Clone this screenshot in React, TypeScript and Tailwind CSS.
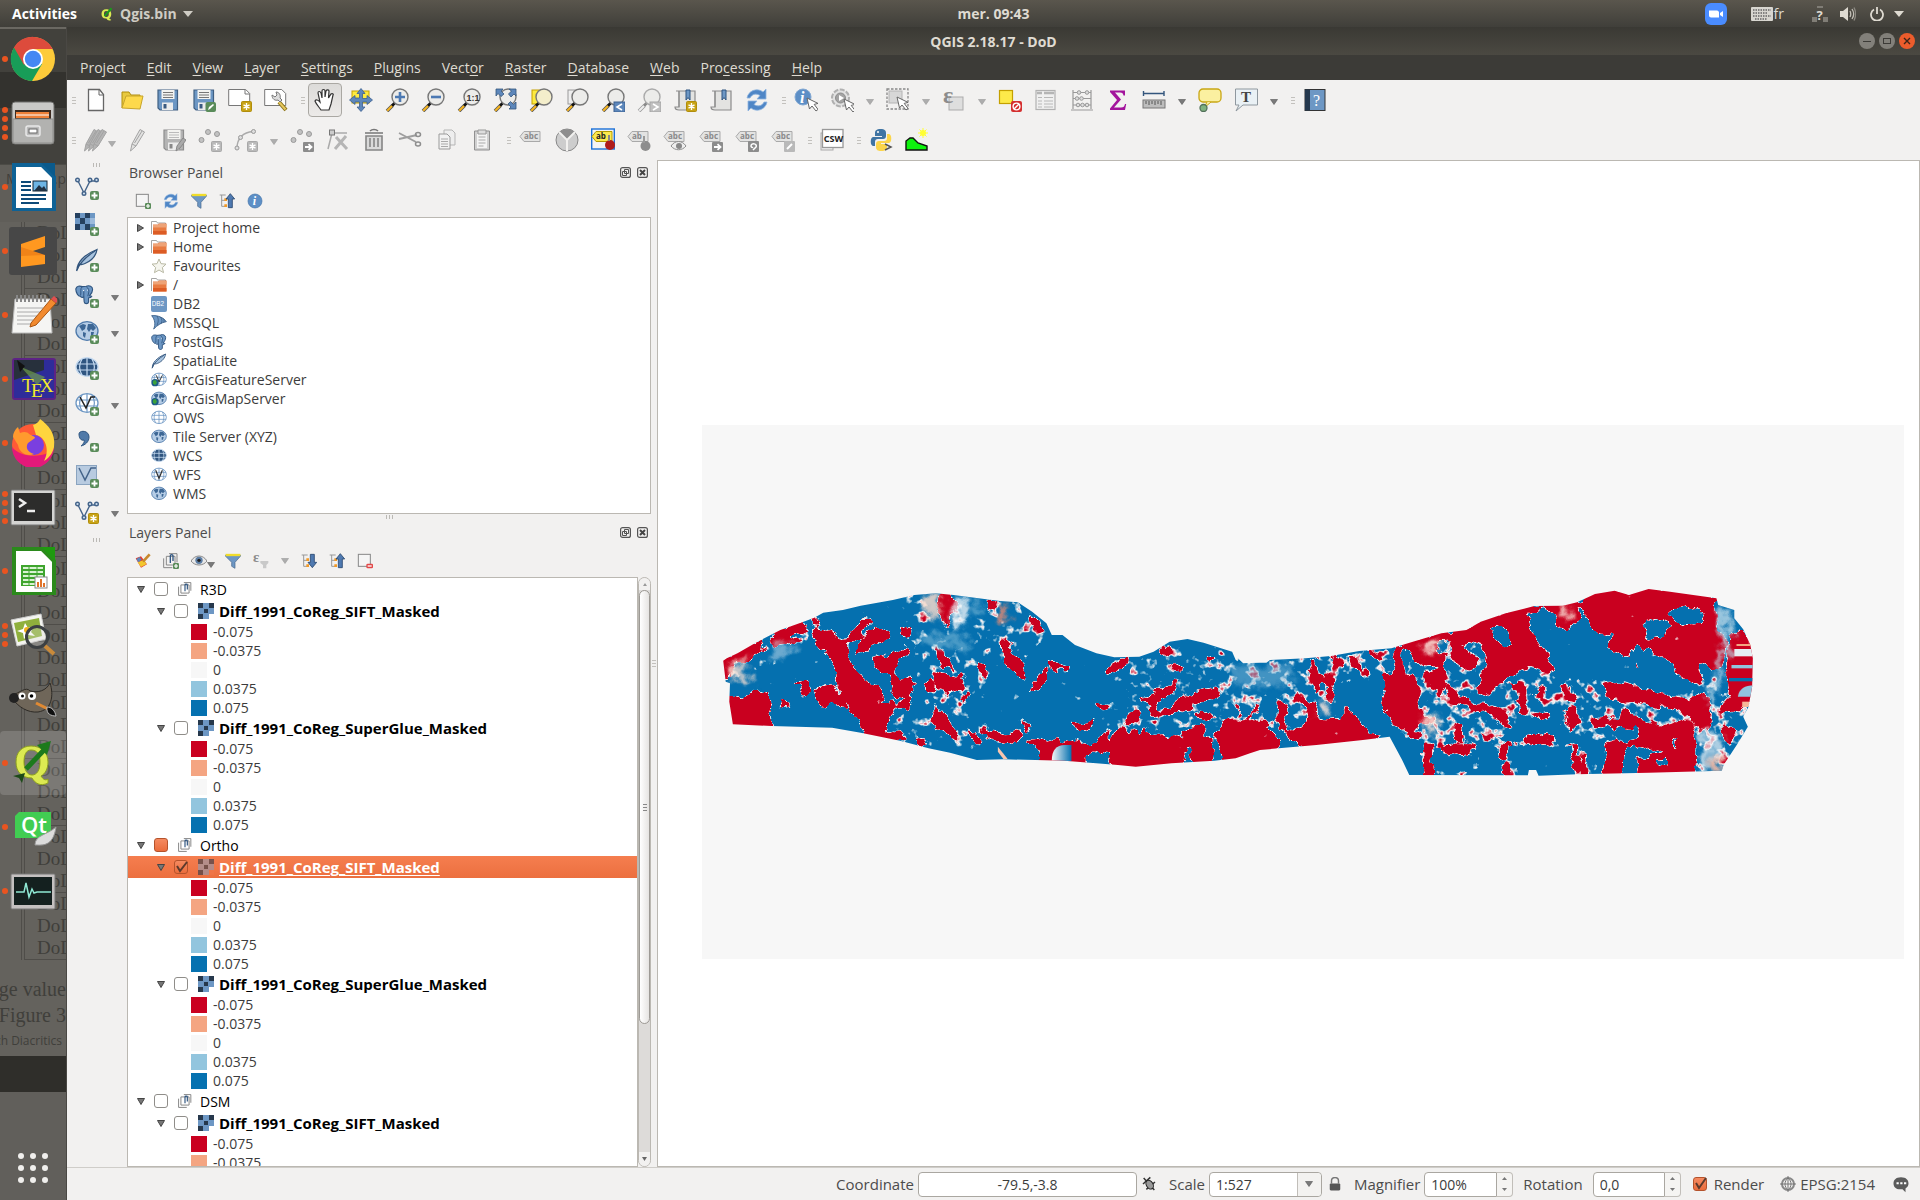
import React from "react";

type Kids = { children?: React.ReactNode };
const BLUE = "#6d97c4";
const NAVY = "#3a5a80";

/* ---------- small drawing helpers ---------- */
function I({ children, s = 24, vb = "0 0 24 24" }: Kids & { s?: number; vb?: string }) {
  return (
    <svg width={s} height={s} viewBox={vb} fill="none" className="shrink-0" aria-hidden="true">
      {children}
    </svg>
  );
}
const Star = ({ grey = false }: { grey?: boolean }) => (
  <g>
    <rect x="13.5" y="13.5" width="10" height="10" rx="1" fill={grey ? "#b9b9b9" : "#c8a315"} stroke={grey ? "#a8a8a8" : "#b08d0c"} />
    <path d="M18.5 15v7M15.5 16.8l6 3.4M21.5 16.8l-6 3.4" stroke="#fff" strokeWidth="1.4" />
  </g>
);
const Plus = () => (
  <g>
    <rect x="15" y="15" width="9" height="9" rx="2" fill="#5a8c5a" />
    <path d="M19.5 16.5v6M16.5 19.5h6" stroke="#fff" strokeWidth="1.8" />
  </g>
);
const ArrowBadge = ({ fill = "#8c8c8c" }: { fill?: string }) => (
  <g>
    <rect x="13" y="14" width="11" height="10" rx="1" fill={fill} />
    <path d="M15 19h6M18.5 16.2l3 2.8-3 2.8" stroke="#fff" strokeWidth="1.8" />
  </g>
);
const Cursor = ({ x = 12, y = 10 }: { x?: number; y?: number }) => (
  <path transform={`translate(${x} ${y})`} d="M0 0l2.500 11 2.500-3 4 5 2-1.600-3.800-5 3.800-1z" fill="#fff" stroke="#666" strokeWidth="1" />
);
const Mag = ({ children, grey = false, back }: Kids & { grey?: boolean; back?: string }) => (
  <I>
    {back && <rect x="3" y="2" width="12" height="14" fill={back} stroke={back === "#fdea3f" ? "#c4a000" : "#999"} />}
    <path d="M2 23l5.500-5.500" stroke={grey ? "#999" : "#555"} strokeWidth="3.600" />
    <path d="M2.200 22.800l5-5" stroke={grey ? "#eee" : "#f6b520"} strokeWidth="2" />
    <path d="M7 17.800l3-3" stroke={grey ? "#888" : "#111"} strokeWidth="2.800" />
    <circle cx="15" cy="9" r="8" fill={back === "#fdea3f" ? "#f4eecb" : "#ececea"} stroke={grey ? "#aaa" : "#777"} strokeWidth="1.400" />
    {children}
  </I>
);
const Floppy = ({ grey = false, children }: Kids & { grey?: boolean }) => (
  <I>
    <path d="M2 2h19.500v20H4l-2-2z" fill={grey ? "#b4b4b4" : BLUE} stroke={grey ? "#8e8e8e" : "#3f5f82"} strokeWidth="1.200" />
    <rect x="5.500" y="2" width="13" height="9" fill="#f3f3f0" />
    <path d="M7 4.500h10M7 7h10M7 9.500h10" stroke={grey ? "#bbb" : "#777"} />
    <rect x="6" y="14.500" width="11" height="7.500" fill="#ececec" />
    <rect x="7.500" y="16" width="3" height="4.500" fill={grey ? "#888" : NAVY} />
    {children}
  </I>
);
const Tag = ({ children, yellow = false, text = "abc" }: Kids & { yellow?: boolean; text?: string }) => (
  <I>
    {yellow && <rect x=".7" y="1" width="22.600" height="20" fill="#f4f4f4" stroke="#1c71d8" strokeWidth="1.400" />}
    <path d="M1 8.500L5 3.500h16v10H5z" fill={yellow ? "#fce94f" : "#e3e3e2"} stroke={yellow ? "#b39a00" : "#a9a9a9"} />
    <text x="5" y="11.300" fontSize="8" fontWeight="700" fontFamily="Open Sans" fill={yellow ? "#222" : "#8a8a8a"}>{text}</text>
    {children}
  </I>
);
const Hollow = "#9a9a9a";
const Dots = ({ children }: Kids) => (
  <I>
    <circle cx="3.500" cy="12" r="2.500" fill="#c2c2c2" stroke={Hollow} />
    <circle cx="10" cy="4" r="2.500" fill="#c2c2c2" stroke={Hollow} />
    <circle cx="19" cy="6" r="2.500" fill="#c2c2c2" stroke={Hollow} />
    {children}
  </I>
);
const VShape = () => (
  <g stroke="#44648a" strokeWidth="1.400">
    <path d="M3 5l6 12 6-12h7" />
    <g fill="#cfdeed">
      <circle cx="2.500" cy="4" r="1.800" /><circle cx="9" cy="17.500" r="1.800" /><circle cx="15" cy="4" r="1.800" /><circle cx="21.500" cy="4" r="1.800" />
    </g>
  </g>
);
const Globe = ({ fill = "#fff", line = "#6d97c4", land = false }: { fill?: string; line?: string; land?: boolean }) => (
  <g>
    <ellipse cx="12" cy="11" rx="11" ry="9.300" fill={fill} stroke={line} strokeWidth="1.300" />
    {land ? (
      <path d="M4 6l4-2 3 1-1 4-3 2-1-2zM13 4l5 0 3 4-3 3-2-2-2 3-2-3zM8 12l3 1-1 5-2-2zM16 12l3 0-1 4-2 0z" fill="#3d6795" />
    ) : (
      <path d="M1.500 8h21M1.500 14h21M12 2v18M7 3c-3 5-3 11 0 16M17 3c3 5 3 11 0 16" stroke={line} strokeWidth="1.200" />
    )}
  </g>
);
const DarkGlobe = () => <Globe fill="#2f5580" line="#c5daf0" />;
const Elephant = () => (
  <g strokeLinejoin="round">
    <path d="M1 5c1-4 5-4 8-3l5-.5c4-1.500 8 0 8 4 0 3-2 6-4 8l3 .5c-1 2-3 2-4 2v5c-.5 3-5 3-5.500 0L11 15c-2 1-4 0-4-1-3 1-6-5-6-9z" fill={BLUE} stroke="#2f5580" strokeWidth="1.400" />
    <path d="M9 2C6 5 8 9 7 13M14 2c3 2 4 5 3 8l-1 4M11 7v8" stroke="#2f5580" strokeWidth="1.200" />
    <path d="M10 7h1.500M15 6.500h1" stroke="#fff" strokeWidth="1.200" />
  </g>
);
const Feather = () => (
  <g>
    <path d="M2 22c0-7 6-15 20-20.500-1 6-5 11-12 14-2 1-5 1-6 .5z" fill="#a9c4df" stroke="#33557c" strokeWidth="1.300" />
    <path d="M1.500 23C5 14 12 8 20 3" stroke="#33557c" strokeWidth="1.300" />
  </g>
);
const Checker = () => (
  <g>
    <rect x="0" y="1" width="20" height="17" fill={BLUE} />
    <path d="M0 1h5v5H0zM10 1h5v5h-5zM5 6h5v6H5zM0 12h5v6H0zM10 12h5v6h-5z" fill="#24405f" />
    <path d="M15 6h5v6h-5z" fill="#9dbbdc" />
  </g>
);
const Refresh = () => (
  <g fill="#4f86c6" stroke="#8fb5df" strokeWidth=".8">
    <path d="M2 10C3 3 12-1 18 4l3-3v10h-9l3-3.500C11 5 7 6 5 10z" />
    <path d="M22 14c-1 7-10 11-16 6l-3 3V13h9l-3 3.500c4 2.500 8 1.500 10-2.500z" />
  </g>
);
const Book = () => (
  <g>
    <path d="M3 3h3v16H2c0 3 2 3 4 3h16V3z" fill="#e3e3e1" stroke="#8b8b8b" strokeWidth="1.200" />
    <path d="M6 3v16" stroke="#8b8b8b" />
    <path d="M13 2h4v10l-2-2.500-2 2.500z" fill={BLUE} stroke="#2f5580" />
  </g>
);
const Pencil = ({ dx = 0, fill = "#e2e2e1" }: { dx?: number; fill?: string }) => (
  <path transform={`translate(${dx} 0)`} d="M3.500 23l1.500-7L13 1.500l4.500 2.500-8.500 14zM5 16l4 2M7.500 15L15 3" fill={fill} stroke="#a3a3a3" />
);
const Python = () => (
  <g>
    <path d="M12 1c-5 0-6 2-6 4v3h7v1H4c-3 0-3 9 0 9h2v-4c0-2 1-3 3-3h5c2 0 3-1 3-3V5c0-3-2-4-5-4z" fill="#3f74a3" />
    <path d="M12 23c5 0 6-2 6-4v-3h-6v-1h8c3 0 3-9 0-9h-2v4c0 2-1 3-3 3h-5c-2 0-3 1-3 3v3c0 3 2 4 5 4z" fill="#fbd54a" />
    <circle cx="9" cy="4" r="1" fill="#fff" />
    <path d="M16 16l6 3-6 3" stroke="#555" strokeWidth="1.500" />
  </g>
);
const Caret = ({ light = false }: { light?: boolean }) => (
  <svg width="8" height="6" viewBox="0 0 8 6" aria-hidden="true"><path d="M.5.500h7L4 5.500z" fill={light ? "#adadad" : "#7a7a7a"} stroke={light ? "#999" : "#555"} strokeWidth=".6" /></svg>
);
const Eps = () => <text x="0" y="13" fontSize="22" fontFamily="Liberation Serif" fontWeight="700" fill="#8c8c8c">ε</text>;

/* ---------- toolbars ---------- */
type Tool = { k?: "grip" | "drop" | "on" | "wide"; n: string; i?: React.ReactNode; light?: boolean };

const row1: Tool[] = [
  { n: "New project", i: <I><path d="M4.500 1.500h11l4 5v16h-15z" fill="#fff" stroke="#666" strokeWidth="1.300" /><path d="M15 2v5h4.500" stroke="#666" /></I> },
  { n: "Open project", i: <I><path d="M2 20V4h7l2 3h9v4" fill="#e8c93f" stroke="#b08d0c" /><path d="M2 20l4-12h17l-3 13z" fill="#fdd94b" stroke="#c8a52a" /></I> },
  { n: "Save", i: <Floppy /> },
  { n: "Save as", i: <Floppy><rect x="13.500" y="14" width="10.500" height="10" rx="2" fill="#5a8c5a" /><path d="M16 22l1-3 4-3 1 1-4 4z" fill="#fff" /></Floppy> },
  { n: "New print composer", i: <I><path d="M.7 1.500h17l4 4v12H.7z" fill="#fff" stroke="#777" /><path d="M17 2v4h4.500" stroke="#777" /><Star /></I> },
  { n: "Composer manager", i: <I><path d="M.7 1.500h17l4 4v12H.7z" fill="#fff" stroke="#777" /><path d="M15 14l7 8" stroke="#8a7318" strokeWidth="4" /><path d="M15 14l6.500 7.500" stroke="#e6c75e" strokeWidth="2" /><path d="M8 7c0 4 3 6 6 5l2 2 2-2-2-2c1-3-1-6-4-6l1 3-2 2z" fill="#ddd" stroke="#777" /></I> },
  { k: "grip", n: "g1" },
  { k: "on", n: "Pan map", i: <I><path d="M8 22c-2-3-5-6-6-9 1-2 3-1 5 1L5 5c0-2 2-2 3 0l1 5V3c0-2 3-2 3 0v6l1-6c1-2 3-1 3 0l-.5 7L18 6c1-1 3 0 2 1l-2 9-2 6z" fill="#fff" stroke="#333" strokeWidth="1.200" /></I> },
  { n: "Pan to selection", i: <I><rect x="3" y="3" width="17" height="12" fill="#fdea3f" stroke="#c4a000" /><path d="M12 .5l4 5h-2.500v5H18V7.500l5.500 4.500-5.500 4.500V14h-4.500v5H16l-4 4.500L8 19h2.500v-5H6v2.500L.5 12 6 7.500V10h4.500V5.500H8z" fill="#5d87bb" stroke="#3c6090" strokeWidth=".8" /></I> },
  { n: "Zoom in", i: <Mag><path d="M15 4v10M10 9h10" stroke="#4c79b3" strokeWidth="2.600" /></Mag> },
  { n: "Zoom out", i: <Mag><path d="M10 9h10" stroke="#4c79b3" strokeWidth="2.600" /></Mag> },
  { n: "Native resolution", i: <Mag><text x="9.500" y="12.500" fontSize="9" fontWeight="700" fontFamily="Liberation Sans" fill="#333">1:1</text></Mag> },
  { n: "Zoom full", i: <Mag><path d="M3 1h7L8 3l3 3-3 2.500-3-3L3 8zM23 1v7l-2-2-3 3-2.500-3 3-3L16 1zM23 21h-7l2-2-3-3 2.500-2.500 3 3L23 14z" fill="#5d87bb" stroke="#33557c" strokeWidth=".8" /></Mag> },
  { n: "Zoom to selection", i: <Mag back="#fdea3f" /> },
  { n: "Zoom to layer", i: <Mag back="#eeeeee" /> },
  { n: "Zoom last", i: <Mag><rect x="13" y="14" width="11" height="10" fill="#5d87bb" stroke="#3c6090" /><path d="M21 16l-5 3 5 3" stroke="#fff" strokeWidth="1.600" /></Mag> },
  { n: "Zoom next", i: <Mag grey><rect x="13" y="14" width="11" height="10" fill="#c0c0c0" stroke="#a5a5a5" /><path d="M16 16l5 3-5 3" stroke="#fff" strokeWidth="1.600" /></Mag> },
  { n: "New bookmark", i: <I><Book /><Star /></I> },
  { n: "Show bookmarks", i: <I><Book /></I> },
  { n: "Refresh", i: <I><Refresh /></I> },
  { k: "grip", n: "g2" },
  { n: "Identify features", i: <I><circle cx="9" cy="9" r="8" fill="#5d8fc6" stroke="#82a8d3" /><text x="6" y="15" fontSize="16" fontStyle="italic" fontWeight="700" fontFamily="Liberation Serif" fill="#fff">i</text><Cursor x={13} y={10} /></I> },
  { n: "Run feature action", i: <I><circle cx="10.500" cy="10" r="8.500" fill="#e2e2e2" stroke="#b0b0b0" strokeWidth="2" strokeDasharray="5 1.500" /><circle cx="10.500" cy="10" r="5" fill="#a4a4a4" stroke="#8d8d8d" /><path d="M9 7l5 3-5 3z" fill="#fff" /><Cursor x={14} y={11} /></I> },
  { k: "drop", n: "Actions", light: true },
  { n: "Select features", i: <I><rect x="1" y="1" width="21" height="20" stroke="#888" strokeDasharray="2.500 1.500" strokeWidth="1.300" /><rect x="3" y="3" width="13" height="12" fill="#d7d7d7" stroke="#b4b4b4" /><Cursor x={11} y={9} /></I> },
  { k: "drop", n: "Selection modes", light: true },
  { n: "Select by expression", i: <I><rect x="7" y="9" width="14" height="13" fill="#dedede" stroke="#ababab" /><text x="1" y="15" fontSize="24" fontFamily="Liberation Serif" fontWeight="700" fill="#8c8c8c">ε</text></I> },
  { k: "drop", n: "Expressions", light: true },
  { n: "Deselect", i: <I><rect x="1.500" y="2.500" width="13" height="13" fill="#fdea4a" stroke="#c4a000" strokeWidth="1.200" /><rect x="13" y="13" width="11" height="11" rx="2" fill="#d42f2f" /><circle cx="18.500" cy="18.500" r="3.400" stroke="#fff" strokeWidth="1.400" /><path d="M16 21l5-5" stroke="#fff" strokeWidth="1.400" /></I> },
  { n: "Attribute table", i: <I><rect x="2" y="2.500" width="19" height="19" fill="#f0f0f0" stroke="#b1b1b1" strokeWidth="1.200" /><path d="M3 5h5M10 5h10" stroke="#b5b5b5" strokeWidth="2.600" /><path d="M4 9.500h4M10 9.500h9M4 13h4M10 13h9M4 16h4M10 16h9M4 19h4M10 19h9" stroke="#b8b8b8" /></I> },
  { n: "Field calculator", i: <I><path d="M3 2v19M21 2v19M1 22h22M3 4.500h18M3 10.500h18M3 17h18" stroke="#999" strokeWidth="1.200" /><g fill="#ddd" stroke="#999"><circle cx="9" cy="4.500" r="1.800" /><circle cx="17" cy="4.500" r="1.800" /><circle cx="7" cy="10.500" r="1.800" /><circle cx="11.500" cy="10.500" r="1.800" /><circle cx="8" cy="17" r="1.800" /><circle cx="12.500" cy="17" r="1.800" /><circle cx="17" cy="17" r="1.800" /></g></I> },
  { n: "Statistics", i: <I><path d="M4 2.500h15v5h-1.500c-.5-2-1-3-3.500-3H9l6 7-7 8h7c2.500 0 3.500-1 4-3.500h1.200L19 22H4v-1.500l7-8.500-7-8z" fill="#a3149c" /></I> },
  { n: "Measure", i: <I><path d="M1.500 3v5M22 3v5M2 5.500h20" stroke="#33557c" strokeWidth="1.400" /><rect x="1" y="12" width="22" height="8" fill="#bdbdbd" stroke="#777" /><path d="M4 13v3M7 13v4M10 13v3M13 13v4M16 13v3M19 13v4" stroke="#555" /></I> },
  { k: "drop", n: "Measure modes" },
  { n: "Map tips", i: <I><rect x="1" y="1" width="22" height="13" rx="4" fill="#fbf0a0" stroke="#c9a715" strokeWidth="1.300" /><path d="M9 14l-3 6 7-6" fill="#fbf0a0" stroke="#c9a715" /><circle cx="5.500" cy="20" r="3.500" fill="#7fb17f" stroke="#52705a" strokeWidth="1.300" /></I> },
  { n: "Text annotation", i: <I><path d="M1.500 1h22v16H9l-7 6 3-6H1.500z" fill="#eaf1f5" stroke="#8f989f" /><text x="7" y="14" fontSize="15" fontWeight="700" fontFamily="Liberation Serif" fill="#444">T</text></I> },
  { k: "drop", n: "Annotations" },
  { k: "grip", n: "g3" },
  { n: "Help contents", i: <I><rect x="2" y="1.500" width="20" height="21" fill={BLUE} stroke="#333" /><rect x="2" y="1.500" width="5" height="21" fill="#24384d" /><text x="10" y="18" fontSize="16" fontFamily="Liberation Serif" fill="#fff">?</text></I> },
];

const row2: Tool[] = [
  { k: "wide", n: "Current edits", i: <I><Pencil dx={-3} fill="#b4b4b4" /><Pencil dx={1} fill="#b4b4b4" /><Pencil dx={5} fill="#b4b4b4" /></I> },
  { n: "Toggle editing", i: <I><Pencil dx={1} /></I> },
  { n: "Save layer edits", i: <Floppy grey><path d="M14 23l1-5 6-8 3 2-6 8z" fill="#aaa" stroke="#888" /></Floppy> },
  { n: "Add feature", i: <Dots><Star grey /></Dots> },
  { n: "Add circular string", i: <I><path d="M3 20C3 11 9 4 19 3.500" stroke="#aaa" strokeWidth="1.400" /><g fill="#ddd" stroke="#999"><circle cx="3" cy="20" r="2" /><circle cx="6.500" cy="9.500" r="2" /><circle cx="19.500" cy="3.500" r="2" /></g><Star grey /></I> },
  { k: "drop", n: "Curve modes", light: true },
  { n: "Move feature", i: <Dots><ArrowBadge /></Dots> },
  { n: "Node tool", i: <I><path d="M2 21L6 5h15" stroke="#aaa" strokeWidth="1.500" /><rect x="3.500" y="2" width="5" height="5" fill="#ccc" stroke="#777" /><path d="M10 9l11 12M20 8L9 21" stroke="#b5b5b5" strokeWidth="3" /></I> },
  { n: "Delete selected", i: <I><path d="M8 3c2-2 6-2 8 0M3 5h18" stroke="#777" strokeWidth="1.600" /><path d="M4 8h16v14H4z" fill="#d9d9d9" stroke="#858585" strokeWidth="1.600" /><path d="M8 10v9M12 10v9M16 10v9" stroke="#858585" strokeWidth="1.600" /></I> },
  { n: "Cut features", i: <I><path d="M1 5l17 9M1 11l18-4" stroke="#9e9e9e" strokeWidth="1.800" /><ellipse cx="20" cy="16" rx="2.500" ry="2" stroke="#8e8e8e" strokeWidth="1.500" /><ellipse cx="20" cy="6.500" rx="2.500" ry="2" stroke="#8e8e8e" strokeWidth="1.500" /></I> },
  { n: "Copy features", i: <I><path d="M10 2h8l3 3v12H10z" fill="#eee" stroke="#b5b5b5" /><path d="M5 6h8l3 3v12H5z" fill="#f2f2f2" stroke="#9a9a9a" /><path d="M7 11h7M7 13.500h7M7 16h7M7 18.500h7" stroke="#aaa" /></I> },
  { n: "Paste features", i: <I><path d="M4.500 3h15v19h-15z" fill="#d0d0d0" stroke="#909090" /><path d="M7 6h10v14H7z" fill="#f4f4f4" /><path d="M8 2h8v4H8z" fill="#ddd" stroke="#999" /><path d="M8.500 9h7M8.500 12h7M8.500 15h7M8.500 18h5" stroke="#aaa" /></I> },
  { k: "grip", n: "g4" },
  { n: "Layer labeling", i: <Tag /> },
  { n: "Diagrams", i: <I><circle cx="12" cy="12" r="11" fill="#cdcdcd" stroke="#888" /><path d="M12 13L4 4.500C8 0 16 0 20 4.500z" fill="#8e8e8e" /><path d="M12 12L4 4M12 12l8-8M12 12v11" stroke="#f2f1ef" strokeWidth="2" /></I> },
  { n: "Highlight pinned labels", i: <Tag yellow text="ab"><circle cx="19" cy="17" r="5" fill="#b01c1c" /><path d="M18 7v6" stroke="#888" strokeWidth="2" /></Tag> },
  { n: "Pin labels", i: <Tag text="ab"><circle cx="18.500" cy="18" r="5" fill="#8d8d8d" /><path d="M17 8v7" stroke="#999" strokeWidth="2" /></Tag> },
  { n: "Show or hide labels", i: <Tag><path d="M8 18c4-6 11-6 15 0-4 5-11 5-15 0z" fill="#eee" stroke="#8d8d8d" /><circle cx="16" cy="18" r="3" fill="#888" /></Tag> },
  { n: "Move label", i: <Tag><ArrowBadge /></Tag> },
  { n: "Rotate label", i: <Tag><rect x="13" y="13" width="11" height="11" rx="1" fill="#8c8c8c" /><path d="M18 22l3-3c2-3-5-5-5-1 0 1 1 2 2 1" stroke="#fff" strokeWidth="1.500" /></Tag> },
  { n: "Change label", i: <Tag><rect x="13" y="13" width="11" height="11" rx="1" fill="#b9b9b9" /><path d="M16 21l5-5" stroke="#fff" strokeWidth="2" /></Tag> },
  { k: "grip", n: "g5" },
  { n: "MetaSearch", i: <I><rect x="1" y="5" width="12" height="17" fill="#eee" stroke="#aaa" /><rect x="2.500" y="1.500" width="20.500" height="18" fill="#fff" stroke="#999" strokeWidth="1.300" /><text x="3.700" y="13.500" fontSize="9" fontWeight="700" fontFamily="Noto Sans, sans-serif" fill="#222">CSW</text></I> },
  { k: "grip", n: "g6" },
  { n: "Python console", i: <I><Python /></I> },
  { n: "Terrain profile", i: <I><path d="M1 22v-9l4-3h3l5 5 9 3v4z" fill="#0ef30e" stroke="#111" strokeWidth="1.400" /><circle cx="18" cy="5" r="3" fill="#ff3" /><path d="M18 0v10M13 5h10M14.500 1.500l7 7M21.500 1.500l-7 7" stroke="#ff3" /></I> },
];

function Grip() {
  return (
    <span className="flex w-[13px] shrink-0 flex-col items-center gap-0.5 pl-1" aria-hidden="true">
      <i className="h-px w-1 bg-[#c3c1bd]" /><i className="h-px w-1 bg-[#c3c1bd]" /><i className="h-px w-1 bg-[#c3c1bd]" />
    </span>
  );
}
function VGrip() {
  return (
    <span className="flex gap-0.5" aria-hidden="true">
      <i className="h-1 w-px bg-[#bbb9b5]" /><i className="h-1 w-px bg-[#bbb9b5]" /><i className="h-1 w-px bg-[#bbb9b5]" />
    </span>
  );
}
function Toolbar({ tools, label }: { tools: Tool[]; label: string }) {
  return (
    <div role="toolbar" aria-label={label} className="-ml-0.5 flex h-10 items-center">
      <Grip />
      {tools.map((t) =>
        t.k === "grip" ? (
          <Grip key={t.n} />
        ) : t.k === "drop" ? (
          <button key={t.n} aria-label={t.n} className="flex h-8 w-5 shrink-0 items-center justify-center pt-1"><Caret light={t.light} /></button>
        ) : t.k === "wide" ? (
          <button key={t.n} aria-label={t.n} className="flex h-9 w-[42px] shrink-0 items-center pl-1.5">{t.i}<span className="pt-2"><Caret light /></span></button>
        ) : t.k === "on" ? (
          <span key={t.n} className="flex w-9 shrink-0 justify-center"><button aria-label={t.n} aria-pressed="true" className="flex size-[34px] items-center justify-center rounded border border-[#aaa8a3] bg-gradient-to-b from-[#dcdbd9] to-[#eceae8]">{t.i}</button></span>
        ) : (
          <button key={t.n} aria-label={t.n} className="flex h-9 w-9 shrink-0 items-center justify-center">{t.i}</button>
        )
      )}
    </div>
  );
}

const sideTools: { n: string; i: React.ReactNode; d?: boolean }[] = [
  { n: "Add vector layer", i: <VShape /> },
  { n: "Add raster layer", i: <Checker /> },
  { n: "Add SpatiaLite layer", i: <Feather /> },
  { n: "Add PostGIS layers", i: <g transform="translate(0 1) scale(.8)"><Elephant /></g>, d: true },
  { n: "Add WMS layer", i: <Globe fill="#b6cde6" line="#4d79aa" land />, d: true },
  { n: "Add WCS layer", i: <DarkGlobe /> },
  { n: "Add WFS layer", i: <g><Globe /><path d="M5 5l6 11 5-11h4" stroke="#222" strokeWidth="1.500" /></g>, d: true },
  { n: "Add delimited text layer", i: <path d="M4 6c0-4 10-4 10 3 0 5-4 8-8 9 2-2 4-4 3-6-3 1-5-2-5-6z" fill="#4f79a8" stroke="#2f5580" /> },
  { n: "Add virtual layer", i: <g><rect x="1.500" y="1.500" width="20" height="19" fill="#b8cbe0" stroke="#8aa4c0" /><path d="M4 4l6 12 6-12h5" stroke="#44648a" strokeWidth="1.500" /></g> },
  { n: "New shapefile layer", i: <VShape />, d: true },
];

/* ---------- menus ---------- */
const menus: [string, string, string][] = [
  ["Pro", "j", "ect"], ["", "E", "dit"], ["", "V", "iew"], ["", "L", "ayer"], ["", "S", "ettings"], ["", "P", "lugins"],
  ["Vect", "o", "r"], ["", "R", "aster"], ["", "D", "atabase"], ["", "W", "eb"], ["Pro", "c", "essing"], ["", "H", "elp"],
];

/* ---------- panels ---------- */
function PanelTitle({ title }: { title: string }) {
  return (
    <div className="flex h-6 items-center pl-0.5 pr-[3px]">
      <h2 className="flex-1 text-[14px] text-[#4c4c4c]">{title}</h2>
      <button aria-label={`Float ${title}`} className="mr-1.5"><I s={11} vb="0 0 11 11"><rect x=".6" y=".6" width="9.800" height="9.800" rx="2" stroke="#555" strokeWidth="1.200" /><path d="M4.500 2.500h4v4h-4zM2.500 4.500h4v4h-4z" stroke="#555" /></I></button>
      <button aria-label={`Close ${title}`}><I s={11} vb="0 0 11 11"><rect x=".6" y=".6" width="9.800" height="9.800" rx="2" stroke="#555" strokeWidth="1.200" /><path d="M3 3l5 5M8 3L3 8" stroke="#444" strokeWidth="2" /></I></button>
    </div>
  );
}
const Funnel = () => <path d="M1 3h22v2l-8 9v9l-5-3v-6L1 5z" fill={BLUE} stroke="#44648a" />;
const TreeArrow = ({ up = false }: { up?: boolean }) => (
  <g>
    <path d="M1 3h9M4 3v17h5M4 11h5" stroke="#999" strokeWidth="1.500" />
    <path d="M8 8h4v4H8zM8 17h4v4H8z" fill="#f39a27" />
    <path d={up ? "M17 1l6.500 8H20v13h-6V9h-3.500z" : "M17 22l6.500-8H20V2h-6v12h-3.500z"} fill="#4f79b0" stroke="#24446b" strokeWidth="1.200" />
  </g>
);
const FunnelIcon = () => <I s={16}><Funnel /><path d="M1 3h22" stroke="#f0dc2a" strokeWidth="3.500" /></I>;
const GroupIcon = () => (
  <I s={14}><path d="M1 8v15h14M5 5v14h14V5zM10 1h12v14" stroke="#888" strokeWidth="1.700" /><path d="M12 16V5c0-2 4-2 4 0v8" stroke="#2f5580" strokeWidth="2" /></I>
);
const browserTools: [string, React.ReactNode][] = [
  ["Add selected layers", <I s={16}><rect x="2" y="2" width="18" height="18" stroke="#888" strokeWidth="1.500" fill="#f5f5f5" /><Plus /></I>],
  ["Refresh browser", <I s={16}><Refresh /></I>],
  ["Filter browser", <FunnelIcon />],
  ["Collapse all items", <I s={16}><TreeArrow up /></I>],
  ["Properties", <I s={16}><circle cx="12" cy="12" r="10.500" fill="#5d8fc6" stroke="#4172a8" /><text x="8.500" y="18.500" fontSize="18" fontStyle="italic" fontWeight="700" fontFamily="Liberation Serif" fill="#fff">i</text></I>],
];
const Folder = () => (
  <I s={16} vb="0 0 16 16">
    <path d="M.5 14V1.500h5l1 1.500h8v2" fill="#fff" stroke="#a5a5a5" />
    <path d="M2 4.500h5l1-1h7.500v11H2z" fill="#e87b42" />
    <path d="M2 5h5l1-1h7.500v3.500H2z" fill="#eea377" />
    <path d="M2 11h13.500v3.500H2z" fill="#dc5c25" />
  </I>
);
const EarthDot = () => <g><circle cx="6" cy="16" r="5.500" fill="#1d5c86" /><path d="M3 13l4-1 2 4-3 4-3-3z" fill="#3ba23b" /></g>;
const browserRows: [string, React.ReactNode, boolean][] = [
  ["Project home", <Folder />, true],
  ["Home", <Folder />, true],
  ["Favourites", <I s={16}><path d="M12 1.500l3 7 7.500.700-5.500 5.200 1.800 7.600L12 18l-6.800 4 1.800-7.600L1.500 9.200 9 8.500z" fill="#f5f5ee" stroke="#b9b9a4" strokeWidth="1.500" /></I>, false],
  ["/", <Folder />, true],
  ["DB2", <I s={16}><rect width="24" height="24" rx="3" fill={BLUE} /><text x="1" y="14.500" fontSize="9.500" fontFamily="Liberation Sans" fill="#fff">DB2</text></I>, false],
  ["MSSQL", <I s={16}><path d="M1 1c9-1 18 3 22 9-7 1-13 5-19 11C7 14 6 7 1 1zM9 1.500c3 5 2 9 0 14M14 3c3 4 3 6 1 10M18 5c2 3 2 4 1 6" fill={BLUE} stroke="#3a5f88" strokeWidth="1.300" /></I>, false],
  ["PostGIS", <I s={16}><Elephant /></I>, false],
  ["SpatiaLite", <I s={16}><Feather /></I>, false],
  ["ArcGisFeatureServer", <I s={16}><Globe /><path d="M8 5l4 10 5-10" stroke="#333" strokeWidth="1.500" /><EarthDot /></I>, false],
  ["ArcGisMapServer", <I s={16}><Globe fill="#b6cde6" line="#4d79aa" land /><EarthDot /></I>, false],
  ["OWS", <I s={16}><Globe /></I>, false],
  ["Tile Server (XYZ)", <I s={16}><Globe fill="#b6cde6" line="#4d79aa" land /></I>, false],
  ["WCS", <I s={16}><DarkGlobe /></I>, false],
  ["WFS", <I s={16}><Globe /><path d="M7 5l5 12 5-12" stroke="#333" strokeWidth="1.800" /></I>, false],
  ["WMS", <I s={16}><Globe fill="#b6cde6" line="#4d79aa" land /></I>, false],
];

const legend: [string, string][] = [
  ["-0.075", "bg-[#ca0020]"], ["-0.0375", "bg-[#f4a582]"], ["0", "bg-[#f7f7f7]"], ["0.0375", "bg-[#92c5de]"], ["0.075", "bg-[#0571b0]"],
];
const groups: { name: string; partial?: boolean; layers: { name: string; on?: boolean }[] }[] = [
  { name: "R3D", layers: [{ name: "Diff_1991_CoReg_SIFT_Masked" }, { name: "Diff_1991_CoReg_SuperGlue_Masked" }] },
  { name: "Ortho", partial: true, layers: [{ name: "Diff_1991_CoReg_SIFT_Masked", on: true }, { name: "Diff_1991_CoReg_SuperGlue_Masked" }] },
  { name: "DSM", layers: [{ name: "Diff_1991_CoReg_SIFT_Masked" }] },
];
const Twist = () => <svg width="8" height="7" viewBox="0 0 8 7" className="shrink-0" aria-hidden="true"><path d="M.5.500h7L4 6.500z" fill="#777" stroke="#444" /></svg>;
const boxCls = "size-3.5 shrink-0 appearance-none rounded-[3px] border border-[#8f8d89] bg-white";
const boxOn = "size-3.5 shrink-0 appearance-none rounded-[3px] border border-[#b5532c] bg-gradient-to-b from-[#f58a60] to-[#ea6c3b]";

function LayerTree() {
  return (
    <ul className="min-w-0 flex-1 overflow-hidden border border-[#bbb8b2] bg-white">
      {groups.map((g) => (
        <li key={g.name}>
          <div className="flex h-[22px] items-center pl-[9px]">
            <Twist />
            <label className="flex items-center text-[14px] text-black">
              <input type="checkbox" className={g.partial ? "ml-[9px] mr-2.5 " + boxOn : "ml-[9px] mr-2.5 " + boxCls} />
              <GroupIcon /><span className="ml-2">{g.name}</span>
            </label>
          </div>
          <ul>
            {g.layers.map((l) => (
              <li key={l.name}>
                <div className={l.on ? "flex h-[22px] items-center bg-gradient-to-b from-[#f57e4f] to-[#ec6f3f] pl-[29px]" : "flex h-[22px] items-center pl-[29px]"}>
                  <Twist />
                  <label className={l.on ? "flex items-center text-[15px] font-bold text-white underline decoration-1 underline-offset-2" : "flex items-center text-[15px] font-bold text-black"}>
                    <span className="relative ml-[9px] mr-2.5 flex">
                      <input type="checkbox" defaultChecked={l.on} className={l.on ? boxOn : boxCls} />
                      {l.on && <svg width="14" height="14" viewBox="0 0 14 14" className="absolute inset-0"><path d="M3 6l3 5L13 2" stroke="#5c3a2c" strokeWidth="2" fill="none" /></svg>}
                    </span>
                    <svg width="16" height="16" viewBox="0 0 16 16" className={l.on ? "shrink-0 opacity-60" : "shrink-0"} aria-hidden="true">
                      <rect width="16" height="16" fill={l.on ? "#8c9bb5" : BLUE} /><path d="M0 0h5v5H0zM11 0h5v5h-5zM6 6h4v4H6zM0 11h5v5H0z" fill="#26384c" /><path d="M11 11h5v5h-5z" fill={l.on ? "#f0774a" : "#fff"} />
                    </svg>
                    <span className="ml-[5px]">{l.name}</span>
                  </label>
                </div>
                <ul>
                  {legend.map(([t, c]) => (
                    <li key={t} className="flex h-[19px] items-center gap-1.5 pl-[63px] text-[14px] text-[#3c3c3c]">
                      <span className={"size-4 shrink-0 " + c} />{t}
                    </li>
                  ))}
                </ul>
              </li>
            ))}
          </ul>
        </li>
      ))}
    </ul>
  );
}

/* ---------- difference raster ---------- */
const LEFT = "translate(700 570) scale(.35714 .33333)";
const RIGHT = "translate(1220 570) scale(.35714 .33333)";
const outlineL = "M65 272L75 265 105 250 150 222 180 205 225 180 290 155 320 143 345 128 400 120 450 107 540 90 600 75 660 70 710 75 780 85 840 93 890 97 930 125 970 160 985 195 1015 195 1050 225 1110 250 1160 262 1230 260 1270 245 1315 215 1365 207 1410 218 1490 245 1500 270 1515 280 1568 278V540L1540 550 1500 565 1440 572 1320 580 1220 590 1170 585 1020 572 850 568 775 570 700 548 640 535 560 512 450 488 370 473 200 468 92 463 82 395 84 340 72 335Z";
const outlineR = "M50 265L65 280 130 278 140 270 240 265 310 258 390 243 480 235 540 215 620 190 690 180 730 155 800 130 880 108 960 107 1000 97 1050 72 1105 62 1145 75 1200 57 1260 65 1390 85 1395 105 1440 120 1440 145 1465 178 1485 225 1492 265 1490 350 1480 410 1465 440 1478 470 1450 520 1410 585 1405 602 1200 608 1000 613 892 617 885 600 865 600 862 616 530 615 510 570 475 500 400 510 270 525 110 540 60 555 45 560Z";

const redL = [
  "M60 385L115 383 145 365 198 366 190 390 200 405 188 425 205 455 200 480 60 480Z",
  "M314 170L355 178 385 200 412 218 414 255 427 298 452 318 472 338 500 348 518 380 500 398 550 398 533 430 527 472 502 505 480 505 452 483 446 455 424 428 421 402 398 385 381 348 380 303 366 268 342 237 316 208Z",
  "M404 215L425 192 455 150 482 150 464 187 432 210Z",
  "M435 252L448 203 490 175 517 180 533 200 507 215 480 225 470 250Z",
  "M482 268L520 256 583 228 570 264 548 292 538 322 512 315 492 292Z",
  "M535 320L595 320 605 345 588 375 550 392 533 357Z",
  "M322 353L375 340 384 368 404 383 418 418 385 408 365 393 345 413 327 398Z",
  "M270 335L302 334 313 355 286 376Z",
  "M55 272L110 245 185 200 172 240 140 268 100 275 80 320 68 340Z",
  "M195 212L215 185 290 150 302 178 270 192 245 202 288 208 210 232Z",
  "M316 138h15v28h-15z",
  "M664 82L680 60 702 66 712 100 705 145 693 177 680 152 664 120Z",
  "M800 90L832 93 824 121 804 120Z",
  "M920 124L955 150 963 190 938 183Z",
  "M844 207L872 235 877 260 905 285 914 326 888 318 858 282 860 258 844 242Z",
  "M661 230L694 263 712 302 678 296 661 267Z",
  "M654 312L690 315 720 322 744 312 730 354 700 366 662 350Z",
  "M652 404L684 428 695 455 716 480 716 510 688 490 658 467Z",
  "M560 178L593 183 593 208 568 203Z", "M630 332h20v30h-20z", "M545 408L580 383 604 366 575 425Z",
  "M910 510L950 503 975 515 1000 503 1020 520 1035 513 1060 513 1097 525 1100 585 950 585 950 540Z",
  "M1103 522L1144 482 1148 550 1098 544Z",
  "M1138 520L1160 505 1180 472 1195 495 1215 475 1225 498 1250 470 1262 495 1340 503 1364 530 1350 600 1150 600Z",
  "M1341 490L1418 458 1405 500 1434 505 1438 585 1380 585 1375 540 1348 514Z",
  "M1465 458L1500 450 1568 456V600H1465Z",
  "M1233 388L1280 368 1338 320 1316 375 1275 409Z", "M1288 429L1350 380 1381 380 1375 418 1320 432Z", "M1378 368L1430 357 1505 350 1442 385 1383 396Z",
  "M922 356L972 282 974 320 944 366Z", "M975 270L1006 283 1003 300 982 294Z", "M1280 238L1314 226 1310 246 1288 252Z", "M1136 304L1198 257 1198 280 1148 314Z",
  "M1036 450L1075 461 1109 444 1090 482 1052 480Z", "M508 486L562 490 576 516 510 514Z", "M783 475L830 487 850 494 902 484 883 525 808 506Z",
  "M1104 398L1142 402 1139 424 1118 419Z", "M225 380L257 410 235 408Z", "M1530 440L1568 395V435L1545 454Z", "M606 505L638 502 627 534 606 526Z",
  "M754 474L784 500 778 526 762 512Z", "M894 438L925 470 910 478Z", "M1006 284L1032 284 1032 302 1008 302Z",
  "M785 270L800 290 800 325 788 310Z", "M735 385L752 365 758 372 742 400Z", "M1255 415L1275 400 1285 430 1265 440Z", "M1195 430L1230 425 1225 450 1200 470Z",
  "M1420 250L1440 265 1425 275Z", "M1325 285L1355 290 1350 305 1330 303Z", "M1390 430L1430 425 1440 440 1400 450Z", "M1440 490L1460 485 1458 520Z",
];
const mottleL = [
  "M560 60L780 85 900 97 985 195 930 250 850 300 780 390 730 520 620 540 560 510 620 420 600 220 560 150Z",
  "M120 230L310 160 320 190 250 260 180 290 90 340 75 290Z",
  "M560 430L900 480 900 520 700 545 520 500Z",
  "M1110 430L1240 330 1568 270V530L1400 470 1200 490 1130 520Z",
  "M1160 262L1365 207 1500 250 1568 280V400L1240 400 1140 330Z",
];
const redR = [
  "M0 455L130 455 135 480 165 500 172 535 60 565 0 590Z",
  "M248 260L270 260 272 308 292 315 322 370 318 402 303 380 290 340 265 372 263 330 248 310Z",
  "M193 482L230 475 245 450 248 420 212 373 265 400 275 450 343 445 345 393 370 430 412 470 418 500 458 500 400 520 270 535 215 535 200 505Z",
  "M310 255L345 270 340 292 316 286Z", "M358 250L385 268 397 312 372 290Z", "M398 240L440 250 455 275 430 262Z", "M400 290L425 300 410 315Z",
  "M163 388L187 400 177 440 192 492 163 472Z", "M72 452L100 405 112 405 95 445Z", "M40 400L60 420 55 440Z", "M300 300L320 330 315 350 300 330Z",
  "M495 238L540 210 620 185 690 175 730 150 800 125 880 103 930 108 880 125 855 130 862 150 875 175 880 205 920 260 942 302 900 300 870 285 830 310 800 325 770 352 733 345 730 310 755 285 750 250 725 220 690 215 675 230 722 265 702 302 675 285 650 265 650 215 620 215 600 245 560 250 510 240Z",
  "M920 108L1000 95 1012 150 970 178 945 160Z",
  "M1000 95L1050 66 1105 56 1145 68 1200 50 1400 78 1382 110 1390 140 1395 180 1420 230 1405 290 1380 295 1345 280 1350 335 1290 322 1265 280 1215 245 1165 225 1162 260 1187 322 1165 290 1158 230 1140 262 1088 242 1085 210 1120 190 1060 192 1030 150Z",
  "M540 252L600 245 630 250 632 287 545 287Z",
  "M566 312L600 300 627 288 627 330 652 365 692 390 692 408 648 395 630 350 613 385 600 340 573 338Z",
  "M455 315L490 310 492 282 515 310 545 320 556 360 550 400 570 440 605 440 560 472 520 482 480 462 470 430 450 415 460 370Z",
  "M488 222L511 235 511 300 487 290Z", "M520 480L565 480 560 510 530 500Z",
  "M1068 343L1100 338 1190 355 1250 380 1312 395 1352 368 1372 400 1378 450 1350 482 1308 432 1260 415 1150 392 1090 392Z",
  "M948 343L992 350 992 402 970 382Z", "M960 420L1000 413 1007 462 980 478Z",
  "M1038 450L1120 440 1128 415 1200 460 1240 467 1312 453 1332 490 1336 620 1168 620 1168 560 1200 557 1242 547 1170 530 1150 525 1132 560 1122 620 1080 620 1078 520 1112 512 1090 470 1050 467Z",
  "M690 398L740 400 800 428 822 480 790 467 750 422 700 417Z", "M832 336L852 348 847 390 862 432 838 427Z", "M800 338L835 345 830 360Z",
  "M882 345L910 350 908 385 880 390 880 372 895 365Z", "M880 440L930 428 910 450Z",
  "M848 508L880 490 938 505 925 522 880 524Z", "M570 518L596 515 596 625 568 625Z",
  "M608 528L715 522 722 540 690 548 640 553Z", "M780 532L822 512V536H785Z", "M783 580H810V620H783Z", "M783 540h22v25h-22z", "M983 515L1000 550 1006 605 990 590Z",
  "M1014 560h10v60h-10z", "M660 460h22v55h-22z", "M730 485L765 510 745 515Z", "M720 350L760 345 750 380 725 370Z",
  "M1425 195L1465 170 1500 240 1500 385 1480 390 1450 420 1398 425 1400 400 1425 380 1420 300Z", "M1415 470L1440 480 1425 540 1410 500Z", "M1280 310L1350 320 1345 345 1300 330Z",
];
const mottleR = [
  "M0 230L60 280 480 235 490 300 330 345 280 480 0 460Z",
  "M540 240L760 180 870 280 960 320 980 440 820 480 700 540 560 520 460 480Z",
  "M600 500L1000 520 1080 620 600 620Z",
  "M940 330L1400 320 1400 480 1080 520 960 480Z",
  "M1140 120L1200 110 1200 220 1140 200Z",
  "M1340 360L1490 380 1470 520 1400 620 1340 620Z",
];
const blueR = [
  "M753 172L800 180 814 215 800 238 775 212Z", "M1248 130L1300 108 1357 125 1350 160 1290 167Z", "M1183 158L1240 148 1262 165 1242 185 1240 207 1198 205Z",
  "M1090 475L1172 473 1178 505 1120 517Z", "M1222 568h30v18h-30z", "M865 130L915 110 890 155Z", "M1180 98h8v8h-8z", "M335 350L450 315 455 415 480 465 455 495 410 455 345 390Z",
  "M890 190L1060 190 1085 240 1120 270 1110 330 950 320 930 270Z", "M1190 275L1260 285 1330 350 1260 375 1180 345 1130 320Z", "M830 525L980 530 990 620 850 620 820 570Z", "M490 500L565 520 565 620 530 620Z", "M725 530L780 535 780 620 725 620Z",
  "M600 560L700 555 710 600 600 600Z", "M865 450L960 440 975 500 930 490 850 490Z", "M120 370L155 370 155 450 130 450Z", "M1268 505h12v25h-12z",
];

function Raster() {
  return (
    <svg viewBox="702 425 1202 534" className="block w-full bg-[#f7f7f7]" role="img" aria-label="Difference raster between -0.075 and 0.075">
      <defs>
        <clipPath id="extent">
          <path d={outlineL} transform={LEFT} />
          <path d={outlineR} transform={RIGHT} />
        </clipPath>
        <filter id="ramp" filterUnits="userSpaceOnUse" x="702" y="560" width="1070" height="230" colorInterpolationFilters="sRGB">
          <feTurbulence type="fractalNoise" baseFrequency=".085" numOctaves="3" seed="7" result="t" />
          <feColorMatrix in="t" type="matrix" values="1 0 0 0 0 1 0 0 0 0 1 0 0 0 0 0 0 0 0 1" result="n" />
          <feGaussianBlur in="SourceGraphic" stdDeviation="1.200" result="b" />
          <feDisplacementMap in="b" in2="t" scale="10" xChannelSelector="B" yChannelSelector="G" result="d" />
          <feComposite in="d" in2="n" operator="arithmetic" k1="0" k2="1" k3="1" k4="-.5" />
          <feComponentTransfer>
            <feFuncR type="table" tableValues=".02 .02 .02 .02 .97 .79 .79 .79 .79" />
            <feFuncG type="table" tableValues=".443 .443 .443 .443 .97 0 0 0 0" />
            <feFuncB type="table" tableValues=".69 .69 .69 .69 .97 .125 .125 .125 .125" />
          </feComponentTransfer>
        </filter>
        <filter id="soft" filterUnits="userSpaceOnUse" x="702" y="560" width="1070" height="230">
          <feTurbulence type="fractalNoise" baseFrequency=".07" numOctaves="3" seed="3" result="t" />
          <feGaussianBlur in="SourceGraphic" stdDeviation="2.500" result="b" />
          <feDisplacementMap in="b" in2="t" scale="22" xChannelSelector="R" yChannelSelector="G" />
        </filter>
        <linearGradient id="fade"><stop offset="0" stopColor="#f7f7f7" /><stop offset="1" stopColor="#0571b0" /></linearGradient>
      </defs>
      <g clipPath="url(#extent)">
        <g filter="url(#ramp)">
          <rect x="690" y="550" width="1100" height="250" fill="#141414" />
          <g transform={LEFT}>
            {mottleL.map((d) => <path key={d} d={d} fill="#4a4a4a" />)}
            {redL.map((d) => <path key={d} d={d} fill="#fff" />)}
            <path d="M868 580V540Q905 508 950 540V580ZM1088 590V560Q1112 528 1142 552V590Z" fill="#000" />
          </g>
          <g transform={RIGHT}>
            {mottleR.map((d) => <path key={d} d={d} fill="#5a5a5a" />)}
            {redR.map((d) => <path key={d} d={d} fill="#eee" />)}
            {blueR.map((d) => <path key={d} d={d} fill="#0c0c0c" />)}
          </g>
        </g>
        <g filter="url(#soft)">
          <g transform={LEFT}>
            <path d="M622 70L668 66 666 120 680 165 640 135 622 115Z" fill="#f5d9cb" opacity=".85" />
            <path d="M712 70L755 85 750 130 730 175 700 190 706 140Z" fill="#eaf1f6" opacity=".8" />
            <path d="M600 195L690 195 760 215 760 240 640 230ZM760 95L800 100 790 140 765 130Z" fill="#92c5de" opacity=".5" />
            <path d="M830 105L862 125 870 155 846 150Z" fill="#e58a72" opacity=".9" />
            <path d="M75 300L150 250 130 280 85 335ZM90 310h60v25h-60z" fill="#f7ded2" opacity=".8" />
            <path d="M210 225L270 215 250 255 190 270Z" fill="#d5e6f0" opacity=".5" />
          </g>
          <g transform={RIGHT}>
            <path d="M20 285L200 280 200 345 60 350Z" fill="#7fb5d6" opacity=".5" />
            <path d="M570 215L622 202 615 245 578 250ZM570 440L620 440 610 480 580 490ZM275 400h40v35h-40zM955 120h30v25h-30z" fill="#fae3d8" opacity=".85" />
            <path d="M1395 110L1430 120 1420 260 1395 340 1380 420 1365 400 1385 320 1405 260Z" fill="#b9d7e8" opacity=".85" />
            <path d="M1345 490L1370 480 1375 600 1345 605ZM1375 500L1410 490 1405 600 1380 590Z" fill="#e8eff4" opacity=".75" />
            <path d="M1375 560h30v45h-30z" fill="#f4b299" opacity=".8" />
          </g>
        </g>
        <path d="M985 572Q985 525 1022 525H1040V574Z" transform={LEFT} fill="url(#fade)" />
        <path d="M834 530L862 568H850L834 545Z" transform={LEFT} fill="#f7c5ae" />
        <g transform={RIGHT}>
          <path d="M1446 222h50v6h-50z" fill="#f4a582" /><path d="M1440 237h56v22h-56z" fill="#e6eef3" />
          <path d="M1432 285h62v10h-62z" fill="#92c5de" /><path d="M1425 324h70v10h-70z" fill="#0571b0" />
          <path d="M1450 380Q1455 346 1496 346V380Z" fill="#92c5de" /><path d="M1462 395h20v16h-20z" fill="#f7b799" />
        </g>
      </g>
    </svg>
  );
}

/* ---------- dock ---------- */
const dockApps: { n: string; dots: number; active?: boolean; i: React.ReactNode }[] = [
  { n: "Chrome", dots: 1, i: <g><circle cx="24" cy="24" r="22" fill="#fdcb3a" /><path d="M24 24L5 13A22 22 0 0 1 43.500 14H24z" fill="#dd4b3c" /><path d="M24 24L5 12.500A22 22 0 0 0 23 46L33 29z" fill="#189d58" /><path d="M5 12.500L15 30l9-16h19.500A22 22 0 0 0 5 12.500z" fill="#dd4b3c" /><circle cx="24" cy="24" r="10" fill="#fff" /><circle cx="24" cy="24" r="8.200" fill="#4587f3" /></g> },
  { n: "Files", dots: 4, i: <g><rect x="3" y="3" width="42" height="42" rx="3" fill="#c9c9c7" stroke="#6e6e6c" /><rect x="6" y="11" width="36" height="10" fill="#3c2a20" /><path d="M7 13h33v6H7z" fill="#ee7f38" /><path d="M7 16h33" stroke="#fff" /><rect x="4" y="20" width="40" height="24" fill="#b2b2b0" stroke="#8e8e8c" /><rect x="17" y="27" width="14" height="10" rx="2" fill="#bcbcbc" stroke="#e8e8e8" strokeWidth="1.500" /><rect x="20" y="30" width="8" height="4" fill="#fff" stroke="#666" /></g> },
  { n: "Writer", dots: 1, i: <g><path d="M5 2h28l12 12v33H5z" fill="#fff" stroke="#0e6296" strokeWidth="4" /><path d="M32 0h14v14z" fill="#0a5a8c" /><path d="M12 19h10M12 23h10M12 27h10M12 32h25M12 36h25M12 40h18" stroke="#0e4a78" strokeWidth="2" /><rect x="24" y="18" width="14" height="10" fill="#6db5e5" stroke="#123" /><path d="M25 28l5-6 3 3 2-2 3 5z" fill="#234" /></g> },
  { n: "Sublime Text", dots: 1, i: <g><rect x="0" y="0" width="48" height="48" rx="3" fill="#474747" /><path d="M12 17l24-8v11l-24 8z" fill="#ff9820" /><path d="M12 20l24 8v9L12 29z" fill="#f08318" /><path d="M12 29l24-1v9L12 40z" fill="#ff9820" /></g> },
  { n: "Text editor", dots: 1, i: <g><path d="M6 8h35l2 34H3z" fill="#f5f5f3" stroke="#bbb" /><path d="M8 4v7M12 4v7M16 4v7M20 4v7M24 4v7M28 4v7M32 4v7M36 4v7" stroke="#888" strokeWidth="2" /><path d="M8 17h26M8 21h24M8 25h20M8 29h16M8 33h20" stroke="#aaa" /><path d="M22 32L42 8l5 4-20 22-6 2z" fill="#f28a2e" stroke="#a85512" /><path d="M42 8l3-3 5 4-3 3z" fill="#e05050" /></g> },
  { n: "TeX", dots: 1, i: <g><rect x="4" y="4" width="42" height="40" rx="2" fill="#2e2c9a" stroke="#5d2385" strokeWidth="2" /><path d="M5 5h30v10L5 25z" fill="#27303c" /><path d="M12 12l24 10-8 8z" fill="#6f9d4a" opacity=".7" /><path d="M8 5l8 6-5 6z" fill="#111" /><g fontFamily="Liberation Serif" fill="#f2ea2a" fontSize="19"><text x="13" y="37">T</text><text x="22" y="42">E</text><text x="31" y="37">X</text></g></g> },
  { n: "Firefox", dots: 1, i: <g><circle cx="24" cy="26" r="21" fill="#ff5a36" /><path d="M3 28a21 21 0 0 0 42 0c0 8-30 15-42 0z" fill="#e3197a" /><path d="M24 6c6-2 7-6 7-6 8 6 16 14 14 28-2 10-10 14-10 14 6-10 2-24-8-26z" fill="#ffd53e" /><circle cx="25" cy="26" r="10" fill="#7a3fe0" /><path d="M4 18c0-6 5-10 5-10l2 6c5-2 8 0 8 0 3 3 7 3 7 5l-7 5c-3 5 0 9 6 11-8 3-15-2-16-9z" fill="#ff9a2e" /></g> },
  { n: "Terminal", dots: 4, i: <g><rect x="2" y="7" width="44" height="35" rx="1" fill="#d4d4d2" stroke="#777" /><rect x="5" y="10" width="38" height="28" fill="#2c2c2b" /><path d="M10 16l6 4-6 4M18 28h8" stroke="#eee" strokeWidth="2.500" /></g> },
  { n: "Calc", dots: 1, i: <g><path d="M5 2h28l12 12v33H5z" fill="#fff" stroke="#2b8a1c" strokeWidth="4" /><path d="M32 0h14v14z" fill="#1f9a10" /><rect x="12" y="18" width="24" height="21" fill="#3fa52e" /><path d="M14 21h20M14 25h20M14 29h20M14 33h20M14 37h20" stroke="#d9f2d3" strokeWidth="2" /><path d="M20 18v21M28 18v21" stroke="#3fa52e" /><rect x="26" y="30" width="12" height="11" fill="#fff" stroke="#888" /><path d="M29 40v-5M32 40v-8M35 40v-4" stroke="#e0732b" strokeWidth="2" /></g> },
  { n: "Image viewer", dots: 3, i: <g><path d="M2 9l30-6 5 25-29 7z" fill="#f4f4f0" stroke="#ccc" /><path d="M5 12l25-5 3 18-24 6z" fill="#8fb03c" /><path d="M16 12l3 5 6-2-3 6 4 4-7-1-4 4-1-6-6-2 6-2z" fill="#fff" /><circle cx="18" cy="19" r="3" fill="#f2b21c" /><circle cx="28" cy="26" r="10.500" fill="#ddd" fillOpacity=".3" stroke="#3c4043" strokeWidth="3" /><path d="M36 35l9 8" stroke="#c98a3a" strokeWidth="4" /></g> },
  { n: "GIMP", dots: 0, i: <g><path d="M3 20c8-2 14-9 18-4 8 2 16 0 20-8 4 12 2 27-12 29-10 1-20-5-26-14z" fill="#6f6659" stroke="#2e2b26" /><ellipse cx="5" cy="23" rx="5" ry="5" fill="#222" /><circle cx="13" cy="21" r="3.500" fill="#fff" /><circle cx="23" cy="21" r="4" fill="#fff" /><circle cx="13.500" cy="21" r="1.500" fill="#000" /><circle cx="22.500" cy="21" r="1.800" fill="#000" /><path d="M27 28l12 6" stroke="#e08a33" strokeWidth="3" /><path d="M38 32c5 0 8 4 9 9-5 0-10-2-9-9z" fill="#111" stroke="#bbb" /></g> },
  { n: "QGIS", dots: 1, active: true, i: <g><path fillRule="evenodd" d="M22 7c10 0 17 6 17 16 0 7-3 12-7 14 2 3 4 5 7 3v4c-8 4-13 0-16-5C12 39 7 32 7 23 7 13 13 7 22 7zm0 4c-5 0-7 5-7 12s3 13 8 13 8-5 8-13-3-12-9-12z" fill="#dcea52" stroke="#8da01f" /><path d="M17 30L35 11" stroke="#1c7a1c" strokeWidth="5" /><path d="M28 6l14-4-4 14z" fill="#1c7a1c" /><path d="M4 37l12-3-3 10-3-5z" fill="#1d4a18" /></g> },
  { n: "Qt Creator", dots: 1, i: <g><path d="M10 9h32v26H6V13z" fill="#41cd52" /><text x="12" y="30" fontSize="22" fontFamily="Open Sans" fontWeight="600" fill="#fff">Qt</text><path d="M26 42c0-10 12-10 21-18-2 14-8 19-19 18z" fill="#dcdcdc" stroke="#999" /></g> },
  { n: "System monitor", dots: 1, i: <g><rect x="2" y="7" width="44" height="35" rx="1" fill="#c4c0c0" stroke="#777" /><rect x="5" y="10" width="38" height="28" fill="#14201f" /><path d="M7 25h8l2-9 3 14 3-8 2 4 3-1h14" stroke="#8fe8d4" strokeWidth="1.500" /></g> },
];

function Dock() {
  return (
    <nav aria-label="Dock" className="relative flex w-[67px] shrink-0 flex-col overflow-hidden border-r border-[#4a4844] bg-[#64625d]">
      <div className="absolute inset-0 flex flex-col font-['Liberation_Serif'] text-[#403f3b]" aria-hidden="true">
        <div className="h-[45px] border-t-2 border-[#6a6862] bg-[#42413c]" />
        <div className="h-9 bg-[#33322e]" />
        <div className="h-14 bg-[#42413d]" />
        <div className="h-[58px] border-t border-[#4c4b46] bg-[#605e59] pt-1 text-right font-['Open_Sans'] text-[14px] leading-5"><span className="pr-3.5">Ma</span><span>ot.p</span></div>
        <div className="flex flex-1 pl-[21px]">
          <div className="flex flex-1 flex-col border-l-4 border-double border-[#4f4d49]">
            {Array.from({ length: 11 }, (_, i) => (
              <div key={i} className="flex flex-1 flex-col justify-end border-b border-[#4f4d49] pl-3 text-[19px] leading-[22px]">
                <span>DoD</span><span>DoD</span><span>DoD</span>
              </div>
            ))}
          </div>
        </div>
        <div className="flex h-24 flex-col items-end whitespace-nowrap pt-4 text-[20px] leading-[26px]">
          <span>ge value</span><span>Figure 3</span><span className="pr-1 font-['Open_Sans'] text-[12px]">tch Diacritics</span>
        </div>
        <div className="h-9 bg-[#2f2e2a]" />
        <div className="h-[108px] bg-[#615f5b]" />
      </div>
      <div className="relative flex flex-col">
        {dockApps.map((a) => (
          <button key={a.n} aria-label={a.n} className={a.active ? "flex h-16 items-center rounded bg-white/15" : "flex h-16 items-center"}>
            <span className="flex w-[9px] flex-col items-center gap-[3px]">
              {Array.from({ length: a.dots }, (_, i) => <i key={i} className="size-[6px] rounded-full bg-[#e95420]" />)}
            </span>
            <I s={48} vb="0 0 48 48">{a.i}</I>
          </button>
        ))}
      </div>
      <button aria-label="Show applications" className="relative mb-[17px] ml-[18px] mt-auto grid w-[30px] grid-cols-3 gap-[6px]">
        {Array.from({ length: 9 }, (_, i) => <i key={i} className="size-[6px] rounded-full bg-[#f0efed]" />)}
      </button>
    </nav>
  );
}

/* ---------- status bar ---------- */
const field = "h-[25px] border border-[#aaa7a1] bg-white px-1.5 text-[14px] text-[#3c3c3c]";
function Spin() {
  return (
    <span className="flex h-[25px] w-4 flex-col items-center justify-center gap-2 rounded-r border border-l-0 border-[#c1beb9] bg-[#f5f4f2]" aria-hidden="true">
      <svg width="5" height="3" viewBox="0 0 5 3"><path d="M0 3h5L2.500 0z" fill="#777" /></svg>
      <svg width="5" height="3" viewBox="0 0 5 3"><path d="M0 0h5L2.500 3z" fill="#777" /></svg>
    </span>
  );
}
function StatusBar() {
  return (
    <footer className="flex h-[33px] shrink-0 items-center justify-end border-t border-[#cfcdc9] pr-2.5 text-[15px] text-[#4c4c4c]">
      <label htmlFor="coord" className="mr-1">Coordinate</label>
      <input id="coord" defaultValue="-79.5,-3.8" className={"w-[219px] rounded text-center " + field} />
      <button aria-label="Toggle extents" className="mx-1"><I s={16}><path d="M4 3l16 18M3 12L14 2M8 20L21 9" stroke="#333" strokeWidth="2.200" /><ellipse cx="13" cy="13" rx="5" ry="7" transform="rotate(-30 13 13)" fill="#999" stroke="#222" strokeWidth="1.500" /></I></button>
      <label htmlFor="scale" className="ml-2 mr-1">Scale</label>
      <span className="relative flex w-[113px]">
        <select id="scale" className={"w-full appearance-none rounded " + field}><option>1:527</option></select>
        <span className="pointer-events-none absolute inset-y-px right-px flex w-6 items-center justify-center rounded-r border-l border-[#c1beb9] bg-[#f3f2f0]"><Caret /></span>
      </span>
      <button aria-label="Lock scale" className="ml-1.5 mr-3"><I s={14}><path d="M6 11V7c0-8 12-8 12 0v4" stroke="#777" strokeWidth="2.500" /><rect x="3" y="11" width="18" height="12" rx="2" fill="#555" /></I></button>
      <label htmlFor="mag" className="mr-1">Magnifier</label>
      <input id="mag" defaultValue="100%" className={"w-[73px] rounded-l " + field} /><Spin />
      <label htmlFor="rot" className="mx-2.5">Rotation</label>
      <input id="rot" defaultValue="0,0" className={"w-[72px] rounded-l " + field} /><Spin />
      <label className="ml-3 mr-4 flex items-center">
        <span className="relative mr-[7px] flex"><input type="checkbox" defaultChecked className={boxOn} /><svg width="14" height="14" viewBox="0 0 14 14" className="absolute inset-0"><path d="M3 6l3 5L13 1" stroke="#5c3a2c" strokeWidth="2" fill="none" /></svg></span>
        Render
      </label>
      <button className="flex items-center gap-1"><I s={16}><circle cx="12" cy="12" r="9" stroke="#888" strokeWidth="3" /><path d="M12 0v24M0 12h24M12 3c-6 5-6 13 0 18M12 3c6 5 6 13 0 18" stroke="#777" strokeWidth="1.500" /></I>EPSG:2154</button>
      <button aria-label="Messages" className="ml-[17px]"><I s={18}><path d="M12 3c7 0 10 4 10 8 0 3-1 5-4 7v5l-4-4C5 20 2 16 2 11c0-4 3-8 10-8z" fill="#5b5b5b" /><path d="M6 11h3M11 11h3M16 11h3" stroke="#fff" strokeWidth="2.500" /></I></button>
    </footer>
  );
}

export default function App() {
  return (
    <div className="flex h-screen flex-col overflow-hidden bg-[#f2f1f0] font-['Open_Sans',sans-serif] text-[14px] leading-[19px]">
      <header className="flex h-[27px] shrink-0 items-center bg-gradient-to-b from-[#5a564d] to-[#403f3a] text-[14px] font-bold text-[#dfdbd2]">
        <button className="w-[93px] pl-3 text-left text-white">Activities</button>
        <div className="flex flex-1 items-center">
          <button className="ml-[7px] flex items-center gap-1.5 text-[#cfccc4]">
            <I s={14} vb="4 0 42 46"><path fillRule="evenodd" d="M22 7c10 0 17 6 17 16 0 7-3 12-7 14l7 6c-8 4-13 0-16-5C12 39 7 32 7 23 7 13 13 7 22 7zm0 6c-5 0-7 4-7 10s3 10 8 10 8-4 8-10-3-10-9-10z" fill="#dcea52" /><path d="M17 30L40 4" stroke="#1c9a1c" strokeWidth="7" /></I>
            Qgis.bin
            <svg width="10" height="6" viewBox="0 0 10 6"><path d="M0 0h10L5 6z" fill="#cfccc4" /></svg>
          </button>
        </div>
        <button>mer. 09:43</button>
        <div className="flex flex-1 items-center justify-end">
          <button aria-label="Zoom" className="mr-6"><I s={22} vb="0 0 22 22"><rect width="22" height="22" rx="6" fill="#4a8cff" /><path d="M4 7.500h8c1 0 2 1 2 2v5H6c-1 0-2-1-2-2zM15 10l3-2v6l-3-2z" fill="#fff" /></I></button>
          <button className="mr-7 flex items-center font-normal"><svg width="22" height="14" viewBox="0 0 22 14" className="mr-px"><rect width="22" height="14" rx="1" fill="#d8d6d0" /><path d="M2 3h18M2 6h14M2 9h18M4 12h12" stroke="#666" strokeDasharray="1.500 1" strokeWidth="1.500" /></svg>fr</button>
          <button aria-label="Network" className="mr-3"><I s={16} vb="0 0 16 16"><path d="M0 11h5v5H0zM11 11h5v5h-5zM5 0h6v2H5z" fill="#807d76" /><text x="4.500" y="13.500" fontSize="13" fontWeight="700" fontFamily="Open Sans" fill="#dfdbd2">?</text></I></button>
          <button aria-label="Volume" className="mr-3.5"><I s={16} vb="0 0 16 16"><path d="M0 5h3l5-4v14l-5-4H0z" fill="#dfdbd2" /><path d="M10 5c1 2 1 4 0 6M12 3c2 3 2 7 0 10" stroke="#dfdbd2" strokeWidth="1.300" opacity=".8" /><path d="M14 1.500c2 4 2 9 0 13" stroke="#8b8880" strokeWidth="1.300" /></I></button>
          <button aria-label="Power" className="mr-2.5"><I s={14} vb="0 0 14 14"><path d="M4 2.500a6 6 0 1 0 6 0M7 0v7" stroke="#dfdbd2" strokeWidth="1.800" /></I></button>
        </div>
        <span className="flex w-[26px] items-center"><svg width="10" height="6" viewBox="0 0 10 6"><path d="M0 0h10L5 6z" fill="#dfdbd2" /></svg></span>
      </header>
      <div className="flex min-h-0 flex-1">
        <Dock />
        <div className="flex min-w-0 flex-1 flex-col">
          <div className="flex h-7 shrink-0 items-center bg-gradient-to-b from-[#3a3934] to-[#4b4942] text-[14px] font-bold text-[#dfdbd2]">
            <span className="w-[68px]" />
            <h1 className="flex-1 text-center">QGIS 2.18.17 - DoD</h1>
            <div className="flex w-[68px] justify-end gap-1 pr-[5px]">
              <button aria-label="Minimise" className="flex size-4 items-center justify-center rounded-full bg-[#82807a]"><i className="h-px w-2 bg-[#3c3b37]" /></button>
              <button aria-label="Maximise" className="flex size-4 items-center justify-center rounded-full bg-[#82807a]"><i className="h-1.5 w-2 border border-[#3c3b37]" /></button>
              <button aria-label="Close" className="flex size-4 items-center justify-center rounded-full bg-[#ec5c2c]"><I s={8} vb="0 0 8 8"><path d="M1 1l6 6M7 1L1 7" stroke="#3c2418" strokeWidth="1.400" /></I></button>
            </div>
          </div>
          <nav aria-label="Menu" className="flex h-[25px] shrink-0 items-center gap-[21px] bg-[#3c3b37] pl-[13px] text-[#dfdbd2]">
            {menus.map(([a, b, c]) => <button key={a + b + c}>{a}<u className="underline-offset-2">{b}</u>{c}</button>)}
          </nav>
          <Toolbar tools={row1} label="Project and navigation" />
          <Toolbar tools={row2} label="Digitizing and labels" />
          <div className="flex min-h-0 flex-1">
            <div role="toolbar" aria-label="Manage layers" className="flex w-[60px] shrink-0 flex-col pl-2">
              <div className="flex h-2.5 items-center pl-[18px]"><VGrip /></div>
              {sideTools.map((t, i) => (
                <div key={t.n} className="flex h-9 items-center justify-between pr-2">
                  <button aria-label={t.n}><I>{t.i}{i === 9 ? <Star /> : <Plus />}</I></button>
                  {t.d && <button aria-label={t.n + " options"} className="pt-1"><Caret /></button>}
                </div>
              ))}
              <div className="flex h-5 items-center pl-[18px]"><VGrip /></div>
            </div>
            <div className="flex w-[524px] shrink-0 flex-col">
              <section className="flex shrink-0 flex-col">
                <PanelTitle title="Browser Panel" />
                <div className="flex h-[33px] items-center gap-3 pl-2">
                  {browserTools.map(([n, i]) => <button key={n} aria-label={n}>{i}</button>)}
                </div>
                <ul className="h-[297px] border border-[#bbb8b2] bg-white">
                  {browserRows.map(([n, i, open]) => (
                    <li key={n} className="flex h-[19px] items-center pl-[9px] text-[#3c3c3c]">
                      <span className="w-3.5">{open && <svg width="7" height="8" viewBox="0 0 7 8"><path d="M.5.500v7L6.500 4z" fill="#777" stroke="#444" /></svg>}</span>
                      {i}<span className="ml-1.5">{n}</span>
                    </li>
                  ))}
                </ul>
              </section>
              <div className="flex h-1.5 shrink-0 items-center justify-center"><VGrip /></div>
              <section className="flex min-h-0 flex-1 flex-col">
                <PanelTitle title="Layers Panel" />
                <div className="flex h-[33px] items-center gap-3 pl-2">
                  <button aria-label="Styling"><I s={16}><path d="M1 8l8-3 9 12-9 5z" fill="#e23b2e" /><path d="M4 14l10-4 3 7-8 4z" fill="#f2c72e" /><path d="M2 9l5-3 3 4-5 4z" fill="#5d87bb" /><path d="M12 13L22 2" stroke="#c8892c" strokeWidth="4" /></I></button>
                  <button aria-label="Add group"><I s={16}><path d="M1 8v14h13M5 5v13h13V5zM9 1h12v13" stroke="#888" strokeWidth="1.500" /><path d="M11 15V4c0-2 4-2 4 0v8" stroke="#2f5580" strokeWidth="2" /><Plus /></I></button>
                  <button aria-label="Visibility" className="flex w-[22px] items-center"><I s={16}><path d="M0 12C6 2 18 2 24 12 18 20 6 20 0 12z" fill="#e8e8e8" stroke="#888" strokeWidth="1.500" /><circle cx="12" cy="11" r="5.500" fill="#5d7ea5" /><circle cx="12" cy="11" r="2.500" fill="#222" /></I><span className="pt-2"><Caret /></span></button>
                  <button aria-label="Filter legend"><FunnelIcon /></button>
                  <button aria-label="Filter by expression"><I s={16}><Eps /><path d="M11 12h12v3l-3 3v5h-5v-5l-4-3z" fill="#c9c9c9" /></I></button>
                  <button aria-label="Filter options"><Caret light /></button>
                  <button aria-label="Expand all"><I s={16}><TreeArrow /></I></button>
                  <button aria-label="Collapse all"><I s={16}><TreeArrow up /></I></button>
                  <button aria-label="Remove layer"><I s={16}><rect x="2" y="2" width="18" height="18" stroke="#888" strokeWidth="1.500" fill="#f5f5f5" /><rect x="14" y="16" width="10" height="7" rx="2" fill="#e24848" /><path d="M16 19.500h6" stroke="#fff" strokeWidth="2" /></I></button>
                </div>
                <div className="flex min-h-0 flex-1">
                  <LayerTree />
                  <div className="flex w-[13px] shrink-0 flex-col rounded-full border border-[#bbb8b2] bg-[#dddbd9]" aria-hidden="true">
                    <div className="flex h-3 items-center justify-center rounded-t-full bg-[#f2f1f0]"><svg width="4" height="3" viewBox="0 0 4 3"><path d="M0 3h4L2 0z" fill="#999" /></svg></div>
                    <div className="flex h-[434px] flex-col items-center justify-center gap-0.5 rounded-full border border-[#9d9a95] bg-gradient-to-r from-white to-[#e6e4e2]">
                      <i className="h-px w-1 bg-[#888]" /><i className="h-px w-1 bg-[#888]" /><i className="h-px w-1 bg-[#888]" />
                    </div>
                    <div className="mt-auto flex h-3.5 items-center justify-center rounded-b-full bg-[#f2f1f0]"><svg width="5" height="4" viewBox="0 0 5 4"><path d="M0 0h5L2.500 4z" fill="#666" /></svg></div>
                  </div>
                </div>
              </section>
            </div>
            <div className="flex w-1.5 shrink-0 flex-col items-center justify-center gap-0.5" aria-hidden="true"><i className="h-px w-1 bg-[#c3c1bd]" /><i className="h-px w-1 bg-[#c3c1bd]" /><i className="h-px w-1 bg-[#c3c1bd]" /></div>
            <main className="flex min-w-0 flex-1 items-center border border-[#bbb8b2] bg-white pl-11 pr-[15px] pt-[57px]">
              <Raster />
            </main>
          </div>
          <StatusBar />
        </div>
      </div>
    </div>
  );
}
